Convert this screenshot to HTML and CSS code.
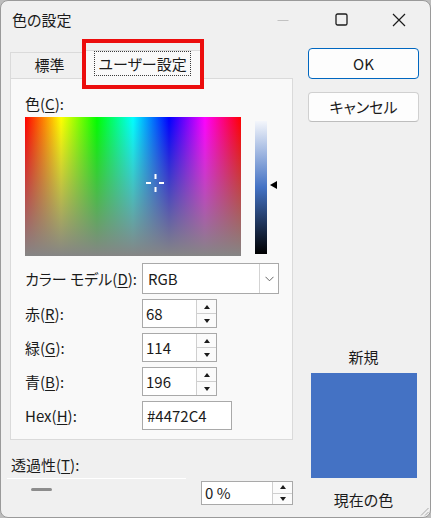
FILE: index.html
```html
<!DOCTYPE html>
<html lang="ja">
<head>
<meta charset="utf-8">
<title>色の設定</title>
<link rel="stylesheet" href="styles.css">
</head>
<body>
<div class="window">
  <div class="titlebar">
    <span class="title">色の設定</span>
    <div class="caption">
      <span class="cap-btn"><svg width="12" height="12" viewBox="0 0 12 12"><path d="M0.5 6.5h11" stroke="#c2c2c2" stroke-width="1"/></svg></span>
      <span class="cap-btn"><svg width="13" height="13" viewBox="0 0 13 13"><rect x="1" y="1" width="11" height="11" rx="1.6" fill="none" stroke="#1b1b1b" stroke-width="1.3"/></svg></span>
      <span class="cap-btn"><svg width="14" height="14" viewBox="0 0 14 14"><path d="M1 1L13 13M13 1L1 13" stroke="#1b1b1b" stroke-width="1.2"/></svg></span>
    </div>
  </div>
  <div class="content">
    <div class="left">
      <div class="tabs">
        <div class="tab">標準</div>
        <div class="tab active"><span class="focus">ユーザー設定</span><span class="highlight"></span></div>
      </div>
      <div class="panel">
        <div class="clabel">色(<u>C</u>):</div>
        <div class="spec-row">
          <div class="spectrum">
            <svg class="cross" width="21" height="21" viewBox="0 0 21 21"><g fill="#fff"><rect x="9.5" y="1" width="2" height="5"/><rect x="9.5" y="14" width="2" height="5"/><rect x="1" y="9" width="5" height="2"/><rect x="14" y="9" width="5" height="2"/></g></svg>
          </div>
          <div class="lum-wrap">
            <div class="lum"></div>
            <span class="lum-arrow"></span>
          </div>
        </div>
        <div class="form">
          <div class="lbl">カラー モデル(<u>D</u>):</div>
          <div class="select">
            <span class="val">RGB</span>
            <span class="arr"><svg width="9" height="6" viewBox="0 0 9 6"><path d="M0.5 0.8L4.5 4.8L8.5 0.8" fill="none" stroke="#555" stroke-width="0.9"/></svg></span>
          </div>
          <div class="lbl">赤(<u>R</u>):</div>
          <div class="spin"><span class="val">68</span><span class="btns"><span class="up"></span><span class="down"></span></span></div>
          <div class="lbl">緑(<u>G</u>):</div>
          <div class="spin"><span class="val">114</span><span class="btns"><span class="up"></span><span class="down"></span></span></div>
          <div class="lbl">青(<u>B</u>):</div>
          <div class="spin"><span class="val">196</span><span class="btns"><span class="up"></span><span class="down"></span></span></div>
          <div class="lbl">Hex(<u>H</u>):</div>
          <div class="textbox">#4472C4</div>
        </div>
      </div>
      <div class="alpha-label">透過性(<u>T</u>):</div>
      <div class="alpha-row">
        <div class="slider"><div class="track"></div><div class="thumb"></div></div>
        <div class="spin alpha-spin"><span class="val">0 %</span><span class="btns"><span class="up"></span><span class="down"></span></span></div>
      </div>
    </div>
    <div class="right">
      <div class="btn primary">OK</div>
      <div class="btn second">キャンセル</div>
      <div class="new-label">新規</div>
      <div class="swatch"></div>
      <div class="cur-label">現在の色</div>
    </div>
  </div>
  <svg class="grip" width="10" height="10" viewBox="0 0 10 10"><path d="M9.5 2L2 9.5M9.5 6L6 9.5" stroke="#a8a8a8" stroke-width="1"/></svg>
</div>
</body>
</html>
```
FILE: styles.css
```css
* { box-sizing: border-box; }
html, body { margin: 0; padding: 0; }
body {
  width: 431px;
  height: 518px;
  overflow: hidden;
  background: #bdbdbd;
  font-family: "Noto Sans CJK JP", "Noto Sans", sans-serif;
  font-size: 15px;
  color: #1b1b1b;
  font-feature-settings: "palt";
}
u { text-decoration-thickness: 1px; text-underline-offset: 2px; }

.window {
  position: relative;
  width: 431px;
  height: 518px;
  background: #f0f0f0;
  border: 1px solid #9a9a9a;
  border-radius: 8px;
  overflow: hidden;
  display: flex;
  flex-direction: column;
}
.titlebar {
  height: 37px;
  display: flex;
  align-items: center;
  padding-left: 11px;
  padding-right: 2px;
}
.title { line-height: 20px; }
.caption { margin-left: auto; display: flex; height: 100%; }
.cap-btn { width: 58px; display: flex; align-items: center; justify-content: center; }

.content { display: flex; flex: 1; }
.left { margin-left: 9px; width: 283px; padding-top: 14px; }

.tabs { display: flex; align-items: flex-end; height: 26px; }
.tab {
  width: 75px;
  height: 26px;
  border: 1px solid #dadada;
  border-bottom: none;
  text-align: center;
  line-height: 24px;
  padding-left: 4px;
}
.tab.active {
  position: relative;
  z-index: 1;
  width: 116px;
  height: 29px;
  margin-bottom: -1px;
  background: #f9f9f9;
  padding: 0 0 0 8px;
  text-align: left;
}
.focus {
  display: block;
  width: 97px;
  height: 25px;
  border: 1px dotted #3a3a3a;
  line-height: 23px;
  text-align: center;
}
.highlight {
  position: absolute;
  left: -4px;
  top: -12px;
  width: 122px;
  height: 50px;
  border: 4px solid #ec0d0d;
}

.panel {
  height: 362px;
  border: 1px solid #dadada;
  background: #f9f9f9;
  padding: 15px 0 0 14px;
}
.clabel { height: 20px; line-height: 20px; }
.spec-row { display: flex; margin-top: 3px; }
.spectrum {
  position: relative;
  width: 216px;
  height: 139px;
  background:
    linear-gradient(to bottom, rgba(128,128,128,0), #858585),
    linear-gradient(to right, #f00 0%, #ff0 16.7%, #0f0 33.3%, #0ff 50%, #00f 66.7%, #f0f 83.3%, #f00 100%);
}
.cross { position: absolute; left: 120px; top: 56px; }
.lum-wrap { position: relative; margin-left: 14px; margin-top: 4px; }
.lum {
  width: 12px;
  height: 133px;
  background: linear-gradient(to bottom, #f4f6fb 0%, #4472c4 50%, #000 100%);
}
.lum-arrow {
  position: absolute;
  left: 15px;
  top: 60px;
  width: 0;
  height: 0;
  border-top: 4px solid transparent;
  border-bottom: 4px solid transparent;
  border-right: 7px solid #000;
}

.form {
  display: grid;
  grid-template-columns: 117px auto;
  row-gap: 5px;
  margin-top: 7px;
  align-items: center;
  justify-items: start;
}
.lbl { line-height: 20px; }
.select {
  width: 137px;
  height: 31px;
  border: 1px solid #a9a9a9;
  background: #fff;
  display: flex;
}
.select .val { flex: 1; padding-left: 5px; line-height: 29px; }
.select .arr {
  width: 19px;
  border-left: 1px solid #d3d3d3;
  display: flex;
  align-items: center;
  justify-content: center;
}
.spin {
  width: 75px;
  height: 29px;
  border: 1px solid #a9a9a9;
  background: #fff;
  display: flex;
}
.spin .val { flex: 1; padding-left: 3px; line-height: 27px; }
.btns {
  width: 20px;
  border-left: 1px solid #cfcfcf;
  display: flex;
  flex-direction: column;
  background: #fbfbfb;
}
.btns span { flex: 1; display: flex; align-items: center; justify-content: center; }
.btns span + span { border-top: 1px solid #cfcfcf; }
.up::before {
  content: "";
  border-left: 3.5px solid transparent;
  border-right: 3.5px solid transparent;
  border-bottom: 4px solid #1b1b1b;
}
.down::before {
  content: "";
  border-left: 3.5px solid transparent;
  border-right: 3.5px solid transparent;
  border-top: 4px solid #1b1b1b;
}
.textbox {
  width: 90px;
  height: 29px;
  border: 1px solid #a9a9a9;
  background: #fff;
  padding-left: 4px;
  line-height: 27px;
}

.alpha-label { margin-top: 15px; margin-left: 1px; line-height: 20px; }
.alpha-row { display: flex; }
.slider { width: 176px; padding-top: 3px; }
.track { height: 1px; background: #fff; margin-left: -3px; }
.thumb {
  margin-left: 21px;
  margin-top: 9px;
  width: 21px;
  height: 3px;
  border-radius: 2px;
  background: #8c8c8c;
}
.alpha-spin { margin-left: auto; margin-top: 6px; width: 92px; height: 24px; }
.alpha-spin .val { line-height: 22px; }

.right {
  margin-left: 15px;
  width: 111px;
  padding-top: 10px;
  display: flex;
  flex-direction: column;
  align-items: center;
}
.btn {
  width: 111px;
  height: 31px;
  border: 1px solid #d0d0d0;
  border-bottom-color: #bdbdbd;
  border-radius: 4px;
  background: #fdfdfd;
  text-align: center;
  line-height: 29px;
}
.btn.primary { border: 1px solid #0067c0; }
.btn.second { margin-top: 13px; height: 30px; line-height: 28px; }
.new-label { margin-top: 225px; line-height: 20px; }
.swatch { margin-top: 6px; width: 106px; height: 105px; background: #4472c4; }
.cur-label { margin-top: 12px; line-height: 20px; }

.grip { position: absolute; right: 1px; bottom: 1px; }
```
